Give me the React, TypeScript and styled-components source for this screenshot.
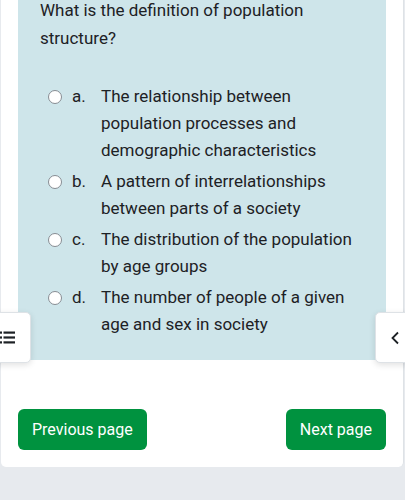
import React, { FC } from "react";
import styled, { createGlobalStyle } from "styled-components";

const GlobalStyle = createGlobalStyle`
	html, body {
		margin: 0;
		padding: 0;
		background: #e7eaee;
		font-family: Roboto, "Noto Sans", sans-serif;
		color: #1d2125;
	}
`;

const Page = styled.div`
	position: relative;
	width: 405px;
	height: 500px;
	overflow: hidden;
`;

const Card = styled.div`
	margin: 0 1px 0 1px;
	background: #ffffff;
	border-right: 1px solid #dee2e6;
	border-radius: 0 0 5px 5px;
	padding: 0 17px 17px 17px;
`;

const Formulation = styled.div`
	background: #cee5ea;
	margin-top: -4px;
	padding: 0 22px 22px 22px;
`;

const QuestionText = styled.p`
	margin: 0 0 31px 0;
	font-size: 17px;
	line-height: 28px;
`;

const Answers = styled.div`
	display: flex;
	flex-direction: column;
	gap: 4px;
`;

const Option = styled.label`
	display: grid;
	grid-template-columns: 14px 19px 1fr;
	column-gap: 10px;
	padding-left: 8px;
	font-size: 17px;
	line-height: 27px;
`;

const Radio = styled.span`
	width: 14px;
	height: 14px;
	margin-top: 6.5px;
	box-sizing: border-box;
	border-radius: 50%;
	border: 1px solid #878c93;
	background: #ffffff;
`;

const Letter = styled.span``;

const ButtonRow = styled.div`
	display: flex;
	justify-content: space-between;
	margin-top: 49px;
`;

const NavButton = styled.button`
	background: #00923f;
	color: #ffffff;
	border: 0;
	border-radius: 6px;
	height: 41px;
	padding: 0 14px;
	font-family: Roboto, "Noto Sans", sans-serif;
	font-size: 16px;
`;

const DrawerToggle = styled.div<{ side: "left" | "right" }>`
	position: absolute;
	top: 312px;
	${(p) => (p.side === "left" ? "left: -19px;" : "right: -20px;")}
	width: 50px;
	height: 51px;
	background: #ffffff;
	border: 1px solid #dee2e6;
	border-radius: 5px;
	box-shadow: 0 2px 6px rgba(0, 0, 0, 0.12);
	display: flex;
	align-items: center;
	box-sizing: border-box;
	${(p) =>
		p.side === "left"
			? "justify-content: flex-end; padding-right: 15px;"
			: "justify-content: flex-start; padding-left: 14px;"}
`;

const ListIcon = () => (
	<svg width="16" height="13" viewBox="0 0 16 13">
		<rect x="0" y="0.5" width="3" height="2.2" fill="#1d2125" />
		<rect x="0" y="5.4" width="3" height="2.2" fill="#1d2125" />
		<rect x="0" y="10.3" width="3" height="2.2" fill="#1d2125" />
		<rect x="4.5" y="0.5" width="11.5" height="2.2" fill="#1d2125" />
		<rect x="4.5" y="5.4" width="11.5" height="2.2" fill="#1d2125" />
		<rect x="4.5" y="10.3" width="11.5" height="2.2" fill="#1d2125" />
	</svg>
);

const ChevronIcon = () => (
	<svg width="10" height="14" viewBox="0 0 10 14">
		<path d="M8 1.5 L2.5 7 L8 12.5" fill="none" stroke="#1d2125" strokeWidth="1.8" />
	</svg>
);

const answers = [
	{ letter: "a.", text: "The relationship between population processes and demographic characteristics" },
	{ letter: "b.", text: "A pattern of interrelationships between parts of a society" },
	{ letter: "c.", text: "The distribution of the population by age groups" },
	{ letter: "d.", text: "The number of people of a given age and sex in society" },
];

const App: FC = () => {
	return (
		<Page>
			<GlobalStyle />
			<Card>
				<Formulation>
					<QuestionText>What is the definition of population structure?</QuestionText>
					<Answers>
						{answers.map((a) => (
							<Option key={a.letter}>
								<Radio />
								<Letter>{a.letter}</Letter>
								<span>{a.text}</span>
							</Option>
						))}
					</Answers>
				</Formulation>
				<ButtonRow>
					<NavButton>Previous page</NavButton>
					<NavButton>Next page</NavButton>
				</ButtonRow>
			</Card>
			<DrawerToggle side="left">
				<ListIcon />
			</DrawerToggle>
			<DrawerToggle side="right">
				<ChevronIcon />
			</DrawerToggle>
		</Page>
	);
};

export default App;
